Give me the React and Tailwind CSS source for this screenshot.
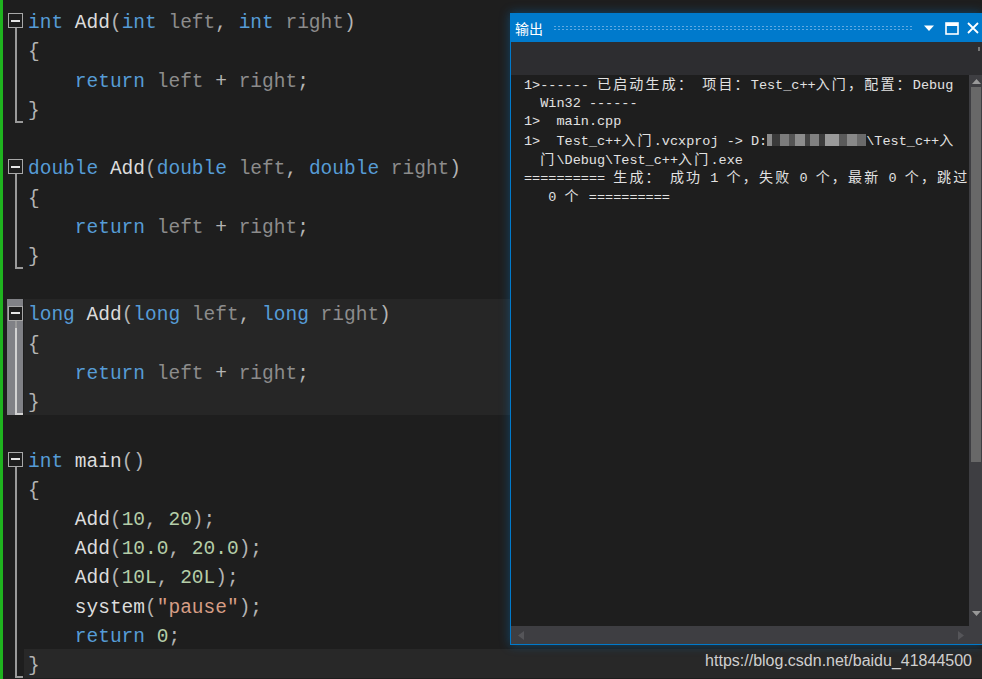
import React from 'react';

// token colours of the VS dark theme
const C = {
  kw: 'text-[#569cd6]',
  fn: 'text-[#dcdcdc]',
  pm: 'text-[#8c8c8c]',
  pu: 'text-[#b4b4b4]',
  nu: 'text-[#b5cea8]',
  st: 'text-[#d69d85]',
};

const t = (c, s) => ({ c, s });

const code = [
  [t('kw', 'int'), t('pu', ' '), t('fn', 'Add'), t('pu', '('), t('kw', 'int'), t('pm', ' left'), t('pu', ', '), t('kw', 'int'), t('pm', ' right'), t('pu', ')')],
  [t('pu', '{')],
  [t('kw', '    return'), t('pm', ' left '), t('pu', '+'), t('pm', ' right'), t('pu', ';')],
  [t('pu', '}')],
  [],
  [t('kw', 'double'), t('pu', ' '), t('fn', 'Add'), t('pu', '('), t('kw', 'double'), t('pm', ' left'), t('pu', ', '), t('kw', 'double'), t('pm', ' right'), t('pu', ')')],
  [t('pu', '{')],
  [t('kw', '    return'), t('pm', ' left '), t('pu', '+'), t('pm', ' right'), t('pu', ';')],
  [t('pu', '}')],
  [],
  [t('kw', 'long'), t('pu', ' '), t('fn', 'Add'), t('pu', '('), t('kw', 'long'), t('pm', ' left'), t('pu', ', '), t('kw', 'long'), t('pm', ' right'), t('pu', ')')],
  [t('pu', '{')],
  [t('kw', '    return'), t('pm', ' left '), t('pu', '+'), t('pm', ' right'), t('pu', ';')],
  [t('pu', '}')],
  [],
  [t('kw', 'int'), t('pu', ' '), t('fn', 'main'), t('pu', '()')],
  [t('pu', '{')],
  [t('fn', '    Add'), t('pu', '('), t('nu', '10'), t('pu', ', '), t('nu', '20'), t('pu', ');')],
  [t('fn', '    Add'), t('pu', '('), t('nu', '10.0'), t('pu', ', '), t('nu', '20.0'), t('pu', ');')],
  [t('fn', '    Add'), t('pu', '('), t('nu', '10L'), t('pu', ', '), t('nu', '20L'), t('pu', ');')],
  [t('fn', '    system'), t('pu', '('), t('st', '"pause"'), t('pu', ');')],
  [t('kw', '    return'), t('pu', ' '), t('nu', '0'), t('pu', ';')],
  [t('pu', '}')],
];

const blocks = [
  { from: 0, to: 3 },
  { from: 5, to: 8 },
  { from: 10, to: 13, hot: true },
  { from: 15, to: 22 },
];

const Gutter = ({ i }) => {
  const b = blocks.find(x => i >= x.from && i <= x.to);
  if (!b) return <div className="w-[21px] shrink-0 h-full" />;
  const line = b.hot ? 'bg-[#d2d2d2]' : 'bg-[#9a9a9a]';
  return (
    <div className="w-[21px] shrink-0 h-full relative">
      {b.hot && <div className="absolute left-[4px] w-[16px] top-0 bottom-0 bg-[#808186]" />}
      {i === b.from ? (
        <>
          <div className="absolute left-[12px] w-[2px] top-[22px] bottom-0 bg-[#9a9a9a]" />
          <div className="absolute left-[5px] top-[7px] w-[15px] h-[15px] border border-[#a8a8a8] bg-[#1e1e1e] flex items-center justify-center">
            <div className="w-[9px] h-[2px] bg-[#e4e4e4]" />
          </div>
        </>
      ) : (
        <div className={`absolute left-[12px] w-[2px] top-0 bottom-0 ${line}`} />
      )}
      {i === b.to && <div className={`absolute left-[12px] bottom-0 w-[8px] h-[2px] ${line}`} />}
    </div>
  );
};

const isWide = (ch) => /[\u3000-\u9fff\uff00-\uffef]/.test(ch);

// CJK glyphs take two monospace cells in the output window
const Out = ({ text }) => (
  <>
    {Array.from(text).map((ch, k) =>
      isWide(ch) ? (
        <span key={k} className="inline-block w-[16.2px] text-[14px] leading-none font-['Noto_Sans_CJK_SC',sans-serif]">{ch}</span>
      ) : (
        <span key={k}>{ch}</span>
      )
    )}
  </>
);

const Blur = () => (
  <span className="inline-flex items-center w-[99px] h-[12px] align-middle -mt-[3px]">
    <span className="w-[5px] h-[12px] bg-[#8a8a8a]" />
    <span className="w-[8px] h-[12px] bg-[#3a3a3a]" />
    <span className="w-[9px] h-[12px] bg-[#7c7c7c]" />
    <span className="w-[6px] h-[12px] bg-[#555]" />
    <span className="w-[10px] h-[12px] bg-[#8d8d8d]" />
    <span className="w-[5px] h-[12px] bg-[#444]" />
    <span className="w-[9px] h-[12px] bg-[#808080]" />
    <span className="w-[6px] h-[12px] bg-[#3c3c3c]" />
    <span className="w-[14px] h-[12px] bg-[#9a9a9a]" />
    <span className="w-[8px] h-[12px] bg-[#5a5a5a]" />
    <span className="w-[10px] h-[12px] bg-[#888]" />
    <span className="w-[9px] h-[12px] bg-[#6a6a6a]" />
  </span>
);

const outLines = [
  <Out text="1>------ 已启动生成： 项目：Test_c++入门，配置：Debug" />,
  <Out text="  Win32 ------" />,
  <Out text="1>  main.cpp" />,
  <><Out text="1>  Test_c++入门.vcxproj -> D:" /><Blur /><Out text="\Test_c++入" /></>,
  <Out text="  门\Debug\Test_c++入门.exe" />,
  <Out text="========== 生成： 成功 1 个，失败 0 个，最新 0 个，跳过" />,
  <Out text="   0 个 ==========" />,
];

const OutputPanel = () => (
  <div className="absolute left-[510px] top-[13px] w-[472px] h-[632px] border border-r-0 border-[#007acc] shadow-[0_0_10px_rgba(0,122,204,0.45)] flex flex-col bg-[#1e1e1e]">
    {/* Title */}
    <div className="h-[28px] bg-[#007acc] flex items-center pl-[4px] pr-[2px] shrink-0">
      <span className="text-white text-[14px] font-['Noto_Sans_CJK_SC',sans-serif]">输出</span>
      <div className="flex-1 mx-[10px] h-[6px] bg-[radial-gradient(circle,#5fa9e2_0.8px,transparent_1.1px)] bg-[length:4px_3px]" />
      <svg width="12" height="8" viewBox="0 0 12 8" className="mr-[10px]">
        <path d="M1 1.5h10L6 7z" fill="#fff" />
      </svg>
      <svg width="14" height="13" viewBox="0 0 14 13" className="mr-[7px]">
        <rect x="1" y="1" width="12" height="11" fill="none" stroke="#fff" strokeWidth="1.6" />
        <rect x="1" y="1" width="12" height="3" fill="#fff" />
      </svg>
      <svg width="14" height="14" viewBox="0 0 14 14">
        <path d="M2 2L12 12M12 2L2 12" stroke="#fff" strokeWidth="1.8" />
      </svg>
    </div>
    {/* Toolbar */}
    <div className="h-[33px] bg-[#2d2d30] shrink-0 flex justify-end items-start pt-[5px] pr-[2px]">
      <div className="w-[2px] h-[4px] bg-[#777]" />
    </div>
    {/* Text + vertical scrollbar */}
    <div className="flex-1 flex min-h-0">
      <div className="flex-1 pl-[13px] pt-[1px] font-['Liberation_Mono',monospace] text-[13.5px] leading-[18.7px] text-[#e2e2e2] whitespace-pre">
        {outLines.map((l, i) => (
          <div key={i} className="h-[18.7px]">{l}</div>
        ))}
      </div>
      <div className="w-[14px] bg-[#3e3e42] flex flex-col items-center shrink-0">
        <svg width="9" height="6" viewBox="0 0 9 6" className="mt-[3px]">
          <path d="M0 6L4.5 1 9 6z" fill="#999" />
        </svg>
        <div className="w-[10px] h-[375px] bg-[#686868] mt-[3px]" />
        <div className="flex-1" />
        <svg width="9" height="6" viewBox="0 0 9 6" className="mb-[9px]">
          <path d="M0 0h9L4.5 5z" fill="#999" />
        </svg>
      </div>
    </div>
    {/* Horizontal scrollbar */}
    <div className="h-[18px] bg-[#3e3e42] shrink-0 flex items-center pl-[7px] pr-[18px]">
      <svg width="6" height="9" viewBox="0 0 6 9">
        <path d="M6 0v9L0 4.5z" fill="#555559" />
      </svg>
      <div className="flex-1" />
      <svg width="6" height="9" viewBox="0 0 6 9">
        <path d="M0 0v9L6 4.5z" fill="#555559" />
      </svg>
    </div>
  </div>
);

const App = () => {
  return (
    <div className="relative w-[982px] h-[679px] bg-[#1e1e1e] overflow-hidden flex">
      <div className="w-[3px] bg-[#1fb41f] shrink-0" />
      <div className="flex-1 pt-[6.4px]">
        {code.map((toks, i) => {
          const hot = i >= 10 && i <= 13;
          const cur = i === 22;
          return (
            <div key={i} className="flex h-[29.23px]">
              <Gutter i={i} />
              <div
                className={`flex-1 pl-[4px] pt-[6px] flex items-center whitespace-pre font-['Liberation_Mono',monospace] text-[19.5px] leading-none ${
                  hot ? 'bg-[#262626]' : cur ? 'bg-[#282828]' : ''
                }`}
              >
                {toks.map((tk, k) => (
                  <span key={k} className={C[tk.c]}>{tk.s}</span>
                ))}
              </div>
            </div>
          );
        })}
      </div>

      <OutputPanel />

      {/* watermark */}
      <div className="absolute right-[10px] bottom-[6px] font-['Liberation_Sans',sans-serif] text-[16px] text-[#cfcfcf]">
        https://blog.csdn.net/baidu_41844500
      </div>
    </div>
  );
};

export default App;
